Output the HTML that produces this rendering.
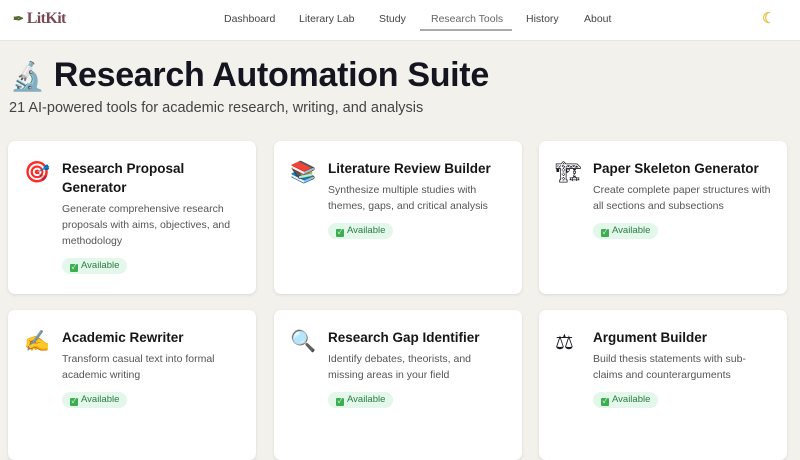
<!DOCTYPE html>
<html><head><meta charset="utf-8"><style>
*{box-sizing:border-box;margin:0;padding:0}
body{width:800px;height:441px;overflow:hidden;background:#f3f1ec;font-family:"Liberation Sans","Noto Sans CJK SC",sans-serif;color:#1a1a24}
.hdr{height:41px;background:#fff;border-bottom:1px solid #e8e6e1;position:relative}
.logo{position:absolute;left:13px;top:10px;font-family:"Liberation Serif",serif;font-size:16px;color:#7a4a55;font-weight:bold;letter-spacing:-0.6px}
.nav{position:absolute;top:0;left:0;width:800px;height:40px}
.nav a{position:absolute;top:13px;font-size:10.5px;color:#444;text-decoration:none}
.act{color:#666!important}
.ul{position:absolute;left:420px;top:29px;width:92px;height:2px;background:#aaa}
.moon{position:absolute;left:762px;top:9px;font-size:15px;color:#e8c44a;font-weight:bold}
h1{position:absolute;left:10px;top:56px;font-size:34px;font-weight:bold;color:#151520;letter-spacing:-0.3px}
.sub{position:absolute;left:9px;top:100px;font-size:14.5px;color:#444}
.card{position:absolute;width:248px;background:#fff;border-radius:7px;box-shadow:0 1px 3px rgba(0,0,0,.1)}
.ic{position:absolute;left:16px;top:20px;font-size:21px}
.t{position:absolute;left:54px;top:18px;font-size:13.5px;font-weight:bold;line-height:19px;width:172px;color:#161616}
.d{font-size:10.5px;color:#555;line-height:16px;font-weight:normal;margin-top:4px}
.b{display:inline-block;margin-top:9px;background:#e3f8ea;color:#2d7a45;font-size:9.5px;font-weight:normal;padding:2px 8px 2px 8px;border-radius:8px;line-height:11px}
.b i{display:inline-block;width:8px;height:8px;background:#3cae4f;border-radius:1px;vertical-align:-1px;margin-right:3px;color:#fff;font-style:normal;font-size:7px;line-height:8px;text-align:center}
</style></head><body>
<div class="hdr">
<div class="logo"><span style="color:#556b2f;font-size:13px">✒</span> LitKit</div>
<div class="nav">
<a style="left:224px">Dashboard</a><a style="left:299px">Literary Lab</a><a style="left:379px">Study</a><a class="act" style="left:431px">Research Tools</a><a style="left:526px">History</a><a style="left:584px">About</a>
<div class="ul"></div></div>
<div class="moon">☾</div>
</div>
<h1><span style="font-size:28px">🔬</span> Research Automation Suite</h1>
<div class="sub">21 AI-powered tools for academic research, writing, and analysis</div>

<div class="card" style="left:8px;top:141px;height:153px"><div class="ic">🎯</div><div class="t">Research Proposal Generator<div class="d">Generate comprehensive research proposals with aims, objectives, and methodology</div><span class="b"><i>✓</i>Available</span></div></div>
<div class="card" style="left:274px;top:141px;height:153px"><div class="ic">📚</div><div class="t" style="width:185px">Literature Review Builder<div class="d" style="width:160px">Synthesize multiple studies with themes, gaps, and critical analysis</div><span class="b"><i>✓</i>Available</span></div></div>
<div class="card" style="left:539px;top:141px;height:153px"><div class="ic">🏗</div><div class="t" style="width:185px">Paper Skeleton Generator<div class="d" style="width:180px">Create complete paper structures with all sections and subsections</div><span class="b"><i>✓</i>Available</span></div></div>

<div class="card" style="left:8px;top:310px;height:150px"><div class="ic">✍</div><div class="t">Academic Rewriter<div class="d" style="width:160px">Transform casual text into formal academic writing</div><span class="b"><i>✓</i>Available</span></div></div>
<div class="card" style="left:274px;top:310px;height:150px"><div class="ic">🔍</div><div class="t" style="width:185px">Research Gap Identifier<div class="d" style="width:160px">Identify debates, theorists, and missing areas in your field</div><span class="b"><i>✓</i>Available</span></div></div>
<div class="card" style="left:539px;top:310px;height:150px"><div class="ic">⚖</div><div class="t" style="width:185px">Argument Builder<div class="d" style="width:172px">Build thesis statements with sub-claims and counterarguments</div><span class="b"><i>✓</i>Available</span></div></div>
</body></html>
